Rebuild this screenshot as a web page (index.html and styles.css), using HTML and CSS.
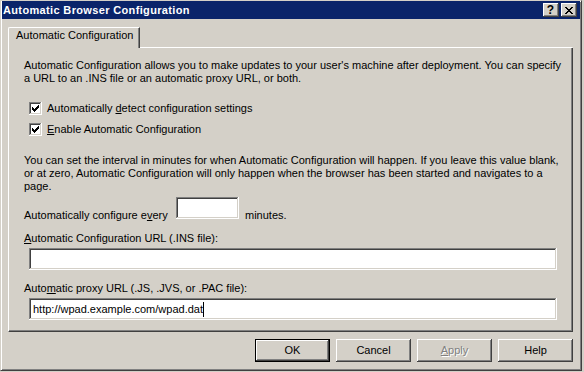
FILE: index.html
```html
<!DOCTYPE html>
<html lang="en">
<head>
<meta charset="utf-8">
<title>Automatic Browser Configuration</title>
<link rel="stylesheet" href="styles.css">
</head>
<body>
<div class="window">
  <div class="titlebar">
    <span class="title">Automatic Browser Configuration</span>
    <div class="caption-btns">
      <span class="cbtn help">?</span>
      <span class="cbtn close"><svg width="8" height="7" viewBox="0 0 8 7" shape-rendering="crispEdges"><path d="M0 0h2v1H0zM6 0h2v1H6zM1 1h2v1H1zM5 1h2v1H5zM2 2h4v1H2zM3 3h2v1H3zM2 4h4v1H2zM1 5h2v1H1zM5 5h2v1H5zM0 6h2v1H0zM6 6h2v1H6z" fill="#000"/></svg></span>
    </div>
  </div>
  <div class="tabs">
    <div class="tab">Automatic Configuration</div>
    <div class="tab-fill"></div>
  </div>
  <div class="panel">
    <p class="para">Automatic Configuration allows you to make updates to your user's machine after deployment. You can specify<br>a URL to an .INS file or an automatic proxy URL, or both.</p>
    <div class="check first">
      <span class="box"><svg width="7" height="7" viewBox="0 0 7 7" shape-rendering="crispEdges"><path d="M6 0h1v1H6zM5 1h2v1H5zM0 2h1v1H0zM4 2h3v1H4zM0 3h2v1H0zM3 3h3v1H3zM0 4h5v1H0zM1 5h3v1H1zM2 6h1v1H2z" fill="#000"/></svg></span>
      <span class="check-label">Automatically <u>d</u>etect configuration settings</span>
    </div>
    <div class="check second">
      <span class="box"><svg width="7" height="7" viewBox="0 0 7 7" shape-rendering="crispEdges"><path d="M6 0h1v1H6zM5 1h2v1H5zM0 2h1v1H0zM4 2h3v1H4zM0 3h2v1H0zM3 3h3v1H3zM0 4h5v1H0zM1 5h3v1H1zM2 6h1v1H2z" fill="#000"/></svg></span>
      <span class="check-label"><u>E</u>nable Automatic Configuration</span>
    </div>
    <p class="para para2">You can set the interval in minutes for when Automatic Configuration will happen. If you leave this value blank,<br>or at zero, Automatic Configuration will only happen when the browser has been started and navigates to a<br>page.</p>
    <div class="every-row">
      <span class="every-label">Automatically configure e<u>v</u>ery</span>
      <div class="field small"></div>
      <span class="minutes">minutes.</span>
    </div>
    <div class="field-label ins"><u>A</u>utomatic Configuration URL (.INS file):</div>
    <div class="field wide"></div>
    <div class="field-label proxy">Auto<u>m</u>atic proxy URL (.JS, .JVS, or .PAC file):</div>
    <div class="field wide"><span class="value">http://wpad.example.com/wpad.dat</span><span class="caret"></span></div>
  </div>
  <div class="buttons">
    <button class="btn default">OK</button>
    <button class="btn">Cancel</button>
    <button class="btn disabled"><u>A</u>pply</button>
    <button class="btn">Help</button>
  </div>
</div>
</body>
</html>
```
FILE: styles.css
```css
html, body {
  margin: 0;
  padding: 0;
  background: #d4d0c8;
}

body {
  font-family: "Liberation Sans", Arial, sans-serif;
  font-size: 11px;
  color: #000;
}

.window {
  width: 582px;
  height: 371px;
  box-sizing: border-box;
  border: 1px solid;
  border-color: #d4d0c8 #404040 #404040 #d4d0c8;
  box-shadow: inset 1px 1px #fff, inset -1px -1px #808080;
  padding: 0 1px 1px 1px;
  background: #d4d0c8;
  display: flex;
  flex-direction: column;
}

.titlebar {
  height: 18px;
  flex: none;
  background: #0a246a;
  display: flex;
  align-items: center;
  justify-content: space-between;
  padding: 0 3px 0 1px;
}

.title {
  color: #fff;
  font-weight: bold;
  font-size: 11px;
  line-height: 13px;
  letter-spacing: 0.35px;
}

.caption-btns {
  display: flex;
  gap: 2px;
}

.cbtn {
  width: 16px;
  height: 14px;
  box-sizing: border-box;
  background: #d4d0c8;
  box-shadow: inset -1px -1px #404040, inset 1px 1px #fff, inset -2px -2px #808080;
  display: flex;
  align-items: center;
  justify-content: center;
}

.cbtn.help {
  font-weight: bold;
  font-size: 12px;
  line-height: 14px;
  padding-right: 1px;
}

.cbtn.close svg {
  display: block;
  margin-left: -1px;
}

.tabs {
  display: flex;
  margin: 8px 0 0 6px;
  width: 565px;
  height: 21px;
  flex: none;
}

.tab {
  width: 132px;
  height: 21px;
  box-sizing: border-box;
  border-top: 1px solid #fff;
  border-left: 1px solid #fff;
  border-right: 1px solid #404040;
  border-top-left-radius: 2px;
  box-shadow: inset -1px 0 #808080;
  padding: 1px 0 0 7px;
  line-height: 13px;
  white-space: nowrap;
}

.tab-fill {
  flex: 1;
  height: 21px;
  box-sizing: border-box;
  border-bottom: 1px solid #fff;
  border-right: 1px solid transparent;
}

.panel {
  margin-left: 6px;
  width: 565px;
  height: 284px;
  flex: none;
  box-sizing: border-box;
  border-left: 1px solid #fff;
  border-right: 1px solid #404040;
  border-bottom: 1px solid #404040;
  box-shadow: inset -1px -1px #808080;
  padding: 11px 0 0 15px;
}

.para {
  margin: 0;
  line-height: 13px;
  white-space: nowrap;
}

.para2 {
  margin-top: 18px;
}

.check {
  display: flex;
  align-items: center;
  height: 13px;
  margin-left: 5px;
}

.check.first {
  margin-top: 17px;
}

.check.second {
  margin-top: 8px;
}

.box {
  width: 13px;
  height: 13px;
  box-sizing: border-box;
  background: #fff;
  box-shadow: inset -1px -1px #fff, inset 1px 1px #808080, inset -2px -2px #d4d0c8, inset 2px 2px #404040;
  padding: 3px;
  flex: none;
}

.box svg {
  display: block;
}

.check-label {
  margin-left: 5px;
  line-height: 13px;
  white-space: nowrap;
}

.every-row {
  display: flex;
  align-items: flex-start;
  margin-top: 4px;
}

.every-label {
  width: 152px;
  margin-top: 12px;
  line-height: 13px;
  white-space: nowrap;
}

.minutes {
  margin-left: 6px;
  margin-top: 12px;
  line-height: 13px;
}

.field {
  height: 22px;
  box-sizing: border-box;
  background: #fff;
  box-shadow: inset -1px -1px #fff, inset 1px 1px #808080, inset -2px -2px #d4d0c8, inset 2px 2px #404040;
  display: flex;
  align-items: center;
  padding: 0 0 0 4px;
  white-space: nowrap;
}

.field.small {
  width: 63px;
}

.field.wide {
  width: 528px;
  margin: 3px 0 0 5px;
}

.field-label {
  line-height: 13px;
  white-space: nowrap;
}

.field-label.ins {
  margin-top: 10px;
}

.field-label.proxy {
  margin-top: 12px;
}

.value {
  line-height: 13px;
}

.caret {
  width: 1px;
  height: 15px;
  background: #000;
  margin-left: 0;
}

.buttons {
  display: flex;
  justify-content: flex-end;
  gap: 6px;
  margin: 7px 0 0 6px;
  width: 565px;
}

.btn {
  width: 75px;
  height: 23px;
  box-sizing: border-box;
  padding: 0;
  margin: 0;
  border: none;
  background: #d4d0c8;
  font: inherit;
  color: #000;
  line-height: 13px;
  box-shadow: inset -1px -1px #404040, inset 1px 1px #fff, inset -2px -2px #808080;
}

.btn.default {
  border: 1px solid #000;
}

.btn.disabled {
  color: #808080;
  text-shadow: 1px 1px 0 #fff;
}
```
